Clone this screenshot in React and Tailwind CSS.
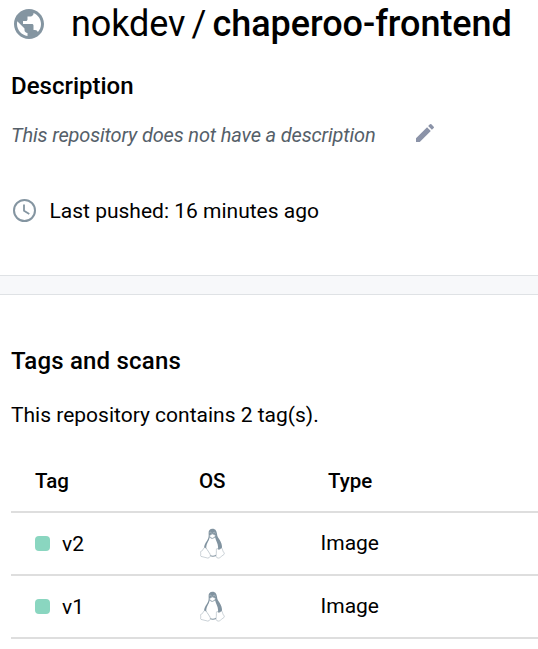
import { MdPublic, MdEdit } from "react-icons/md";

function Penguin() {
  return (
    <svg viewBox="0 0 25 31" className="h-[31px] w-[25px]" fill="none">
      <path
        d="M12.500 .8C9.900.8 8.500 2.600 8.600 5c.1 2.500.3 4.300-.8 6.300-1.200 2.200-2.900 4.200-3.500 6.700-.3 1.200-.2 2.200-.2 3.200l3.300 2.500 2.400 4.400c2 1 4.300.9 6.300 0l1-5.600 4.900-2c.3-3.300-.8-6.200-2.400-8.700-1.400-2.200-2.500-3.400-2.600-6C16.600 3 15.500.8 12.500.8Z"
        fill="#8193a0"
      />
      <path
        d="M9.700 9.300c.9 1.700 3.600 1.900 5.400-.1.500 3.200 3 6.100 3 10.300 0 3.400-.8 6.500-2.400 7.600-1.800.7-4.100.7-5.600 0-.8-2.800-3.900-5-3.900-7.800 0-3.600 2.900-6.200 3.500-10Z"
        fill="#fff"
      />
      <path d="M9.500 5.200c0-1.300 1.900-1.300 2.100.2M13.100 5.400c.1-1.700 2.300-1.500 2.300.2" stroke="#c3ccd2" strokeWidth=".6" />
      <path d="m9.700 7.400 2.600-1.500 3 1.300-.5 1.700-2.500 1.400-2.400-1.300Z" fill="#fff" stroke="#a6b2bb" strokeWidth=".5" />
      <path
        d="M4.200 19.800c1-.5 2.200.3 2.900 1.700l2.900 4.400c1 1.800-.2 4.200-2.200 4.200L1 28.400c-.9-.4-.1-1.800-.3-3.100-.2-1.500-.2-2.200 1.200-2.500 1.100-.2 1.100-2.300 2.300-3ZM17 20.300c1.300 1.800 3.300 1.400 4.300-.4 1.600.3 1 2.500 2 3.800 1.600 1.800 1.200 2.600-.3 3.500-1.900 1.100-2.800 2.900-4.700 2.900-2.500-.1-2.400-2.100-2-4.700.3-1.700-.4-4.200.7-5.100Z"
        fill="#fff"
        stroke="#a8b4bc"
        strokeWidth=".6"
      />
    </svg>
  );
}

function TagRow({ name }) {
  return (
    <div className="flex h-[63px] items-center border-b-2 border-[#dedede]">
      <div className="flex w-[189px] items-center pl-6">
        <span className="size-[15px] rounded-[4px] bg-[#8ad6c0]" />
        <span className="pl-3">{name}</span>
      </div>
      <div className="w-[120.500px]">
        <Penguin />
      </div>
      <div className="pb-0.5">Image</div>
    </div>
  );
}

export default function App() {
  return (
    <main className="h-[649px] w-[538px] overflow-hidden bg-white font-['Roboto',sans-serif] text-[21px] leading-[30px] text-black">
      <section className="h-[275px] pl-[11px]">
        <header className="flex h-12 items-center">
          <MdPublic className="size-9 text-[#8495a1]" />
          <h1 className="pl-6 text-[36px] leading-[48px] tracking-[-0.1px] whitespace-nowrap [word-spacing:-2.600px]">
            nokdev / <span className="font-medium tracking-[-0.05px]">chaperoo-frontend</span>
          </h1>
        </header>
        <h2 className="pt-[20px] text-[24px] leading-9 font-medium">Description</h2>
        <div className="flex items-center pt-4">
          <p className="w-[402px] text-[20px] tracking-[-0.15px] text-[#556069] italic">This repository does not have a description</p>
          <MdEdit className="mb-1 size-6 text-[#8b93a8]" />
        </div>
        <div className="flex items-center pt-[46px]">
          <svg viewBox="0 0 27 27" className="size-[27px]" fill="none" stroke="#8495a1">
            <circle cx="13.500" cy="13.500" r="10.500" strokeWidth="2" />
            <path d="M13 7.500v6.200l5.300 3.200" strokeWidth="1.800" />
          </svg>
          <span className="-mb-0.5 pl-[11.500px]">Last pushed: 16 minutes ago</span>
        </div>
      </section>
      <div className="h-5 border-y border-[#dfe2e5] bg-[#f7f8fa]" />
      <section className="pt-12 pl-[11px]">
        <h2 className="text-[24px] leading-9 font-medium tracking-[0.2px]">Tags and scans</h2>
        <p className="pt-[21px]">This repository contains 2 tag(s).</p>
        <div className="mt-[20px]">
          <div className="flex h-[63px] items-center border-b-2 border-[#dedede] text-[20.500px] font-medium">
            <div className="w-[188px] pl-6">Tag</div>
            <div className="w-[129px]">OS</div>
            <div>Type</div>
          </div>
          <TagRow name="v2" />
          <TagRow name="v1" />
        </div>
      </section>
    </main>
  );
}
